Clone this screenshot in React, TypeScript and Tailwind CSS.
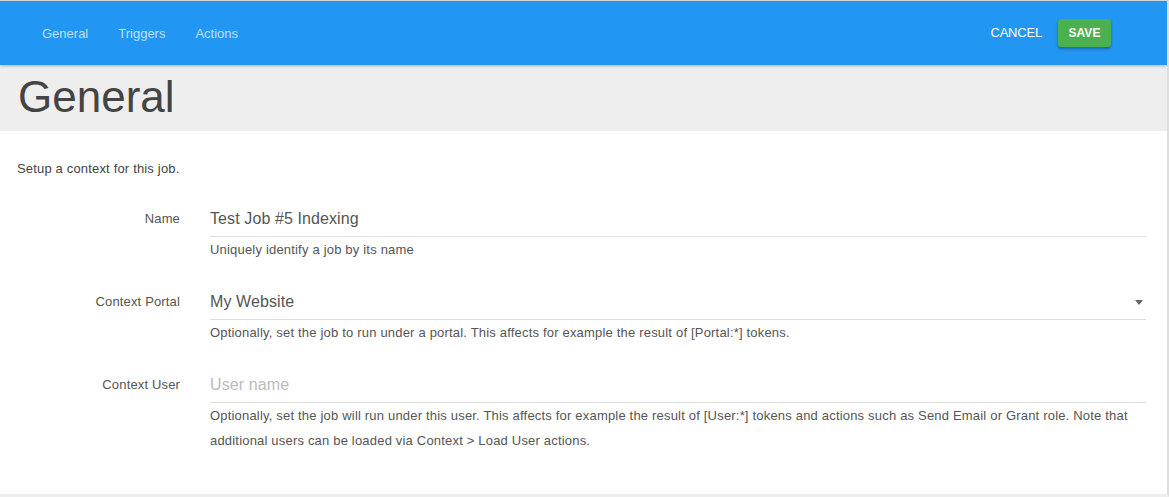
import React from "react";

function Row({
  label,
  children,
  help,
}: {
  label: string;
  children: React.ReactNode;
  help: React.ReactNode;
}) {
  return (
    <div className="grid grid-cols-[180px_1fr] gap-x-[30px]">
      <div className="h-[36px] flex items-center justify-end text-[13px] tracking-[0.15px] text-[#555]">{label}</div>
      <div>
        <div className="h-[36px] flex items-center border-b border-[#dddddd] relative">{children}</div>
        <div className="text-[13px] leading-[25px] tracking-[0.19px] text-[#555]">{help}</div>
      </div>
    </div>
  );
}

export default function App() {
  return (
    <div
      className="w-[1169px] h-[497px] overflow-hidden bg-white border-t border-[#d4d4d4] border-r-2 border-r-[#dedede] border-b-[3px] border-b-[#eeeeee] flex flex-col"
      style={{ fontFamily: '"Liberation Sans", Arial, sans-serif' }}
    >
      <header className="h-[64px] shrink-0 bg-[#2196F3] flex items-center pl-[42px] pr-[56px] shadow-[0_1px_3px_rgba(0,0,0,0.25)] relative z-10">
        <nav className="flex gap-[30px] text-[13px] text-[#bfe0fb] pt-[2px]">
          <span>General</span>
          <span>Triggers</span>
          <span>Actions</span>
        </nav>
        <div className="ml-auto flex items-center gap-[16px]">
          <span className="text-[13px] text-white tracking-[-0.2px]">CANCEL</span>
          <button className="w-[53px] h-[28px] rounded-[3px] bg-[#4CAF50] text-white text-[12px] font-bold shadow-[0_2px_3px_rgba(0,0,0,0.3)] flex items-center justify-center">
            SAVE
          </button>
        </div>
      </header>
      <div className="h-[66px] shrink-0 bg-[#eeeeee] flex items-center pl-[18px]">
        <h1 className="text-[44px] leading-none text-[#444] mt-[-2px]">General</h1>
      </div>
      <div className="flex-1 pt-[28px] pr-[21px]">
        <p className="pl-[17px] text-[13px] leading-[20px] tracking-[0.17px] text-[#444]">Setup a context for this job.</p>
        <div className="mt-[22px] flex flex-col gap-[22px]">
          <Row label="Name" help="Uniquely identify a job by its name">
            <span className="text-[16px] tracking-[0.1px] text-[#555]">Test Job #5 Indexing</span>
          </Row>
          <Row
            label="Context Portal"
            help="Optionally, set the job to run under a portal. This affects for example the result of [Portal:*] tokens."
          >
            <span className="text-[16px] tracking-[0.1px] text-[#555]">My Website</span>
            <span className="absolute right-[3px] top-[16px] w-0 h-0 border-l-[4px] border-r-[4px] border-t-[5px] border-l-transparent border-r-transparent border-t-[#666]" />
          </Row>
          <Row
            label="Context User"
            help={
              <>
                Optionally, set the job will run under this user. This affects for example the result of [User:*] tokens and actions such as Send Email or Grant role. Note that additional users can be loaded via Context &gt; Load User actions.
              </>
            }
          >
            <span className="text-[16px] tracking-[0.1px] text-[#bbb]">User name</span>
          </Row>
        </div>
      </div>
    </div>
  );
}
